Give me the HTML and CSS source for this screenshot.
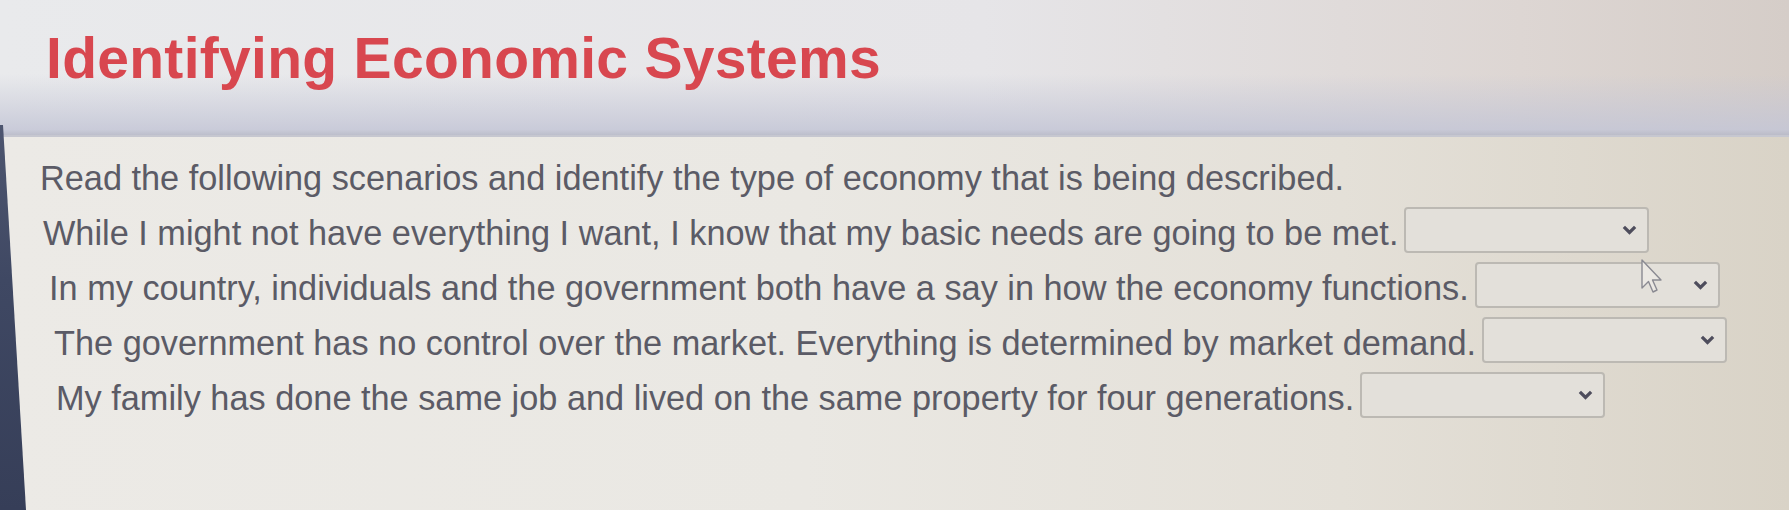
FILE: index.html
```html
<!DOCTYPE html>
<html lang="en">
<head>
    <meta charset="UTF-8">
    <meta name="viewport" content="width=device-width, initial-scale=1.0">
    <title>Identifying Economic Systems</title>
    <link rel="stylesheet" href="styles.css">
</head>
<body>
    <div class="screen">
        <div class="bezel"></div>
        <header class="page-header">
            <h1 class="title">Identifying Economic Systems</h1>
        </header>
        <main class="activity">
            <p class="intro">Read the following scenarios and identify the type of economy that is being described.</p>
            <div class="question q1">
                <span class="prompt">While I might not have everything I want, I know that my basic needs are going to be met.</span>
                <div class="dropdown">
                    <svg class="chevron" viewBox="0 0 12 8"><polyline points="1.5,1.5 6,6 10.5,1.5"/></svg>
                </div>
            </div>
            <div class="question q2">
                <span class="prompt">In my country, individuals and the government both have a say in how the economy functions.</span>
                <div class="dropdown">
                    <svg class="chevron" viewBox="0 0 12 8"><polyline points="1.5,1.5 6,6 10.5,1.5"/></svg>
                    <svg class="cursor" viewBox="0 0 24 38"><path d="M2 2 L2 30 L8.5 23.5 L13 34 L17 32 L12.5 22 L21 22 Z"/></svg>
                </div>
            </div>
            <div class="question q3">
                <span class="prompt">The government has no control over the market. Everything is determined by market demand.</span>
                <div class="dropdown">
                    <svg class="chevron" viewBox="0 0 12 8"><polyline points="1.5,1.5 6,6 10.5,1.5"/></svg>
                </div>
            </div>
            <div class="question q4">
                <span class="prompt">My family has done the same job and lived on the same property for four generations.</span>
                <div class="dropdown">
                    <svg class="chevron" viewBox="0 0 12 8"><polyline points="1.5,1.5 6,6 10.5,1.5"/></svg>
                </div>
            </div>
        </main>
    </div>
</body>
</html>
```
FILE: styles.css
```css
body {
    margin: 0;
    padding: 0;
    font-family: "Liberation Sans", Arial, sans-serif;
    background: #e8e6e1;
    overflow: hidden;
}

.screen {
    position: relative;
    width: 1789px;
    height: 510px;
    display: flex;
    flex-direction: column;
    overflow: hidden;
}

/* dark monitor edge down the left side */
.bezel {
    position: absolute;
    left: 0;
    top: 0;
    width: 34px;
    height: 510px;
    background: linear-gradient(180deg, #5a6179 0%, #3f4863 55%, #363e58 100%);
    clip-path: polygon(0 125px, 3px 125px, 26px 510px, 0 510px);
    z-index: 3;
}

.page-header {
    height: 137px;
    padding: 30px 0 0 46px;
    box-sizing: border-box;
    background:
        linear-gradient(180deg, rgba(232, 232, 236, 0) 55%, rgba(196, 198, 214, 0.85) 96%, rgba(184, 186, 200, 0.9) 100%),
        linear-gradient(90deg, #e9eaec 0%, #e6e5e8 55%, #ddd6d3 85%, #d5cdc8 100%);
    border-bottom: 2px solid #c6c7d0;
}

.title {
    margin: 0;
    font-size: 57px;
    line-height: 57px;
    font-weight: bold;
    color: #d8474f;
    letter-spacing: 0.3px;
}

.activity {
    flex: 1;
    padding: 22px 0 0 40px;
    background: linear-gradient(90deg, #eceae6 0%, #eae8e3 45%, #e4e0d8 75%, #d9d3c7 100%);
    color: #5b5b66;
    font-size: 34.3px;
}

.intro {
    margin: 0 0 9px 0;
    line-height: 38px;
}

.question {
    display: flex;
    align-items: center;
    gap: 6px;
    height: 55px;
}

.q1 { padding-left: 3px; }
.q2 { padding-left: 9px; }
.q3 { padding-left: 14px; }
.q4 { padding-left: 16px; }

.prompt {
    white-space: nowrap;
}

.dropdown {
    position: relative;
    width: 245px;
    height: 46px;
    flex: none;
    box-sizing: border-box;
    border: 2px solid #bcb9b3;
    border-radius: 4px;
    background: #e3e0da;
    margin-top: -8px;
}

.chevron {
    position: absolute;
    right: 10px;
    top: 16px;
    width: 15px;
    height: 10px;
    fill: none;
    stroke: #4e4d5c;
    stroke-width: 2.6;
}

.cursor {
    position: absolute;
    left: 163px;
    top: -6px;
    width: 24px;
    height: 38px;
    fill: #ebe8e3;
    stroke: #8a8a92;
    stroke-width: 1.4;
    stroke-linejoin: round;
}
```
